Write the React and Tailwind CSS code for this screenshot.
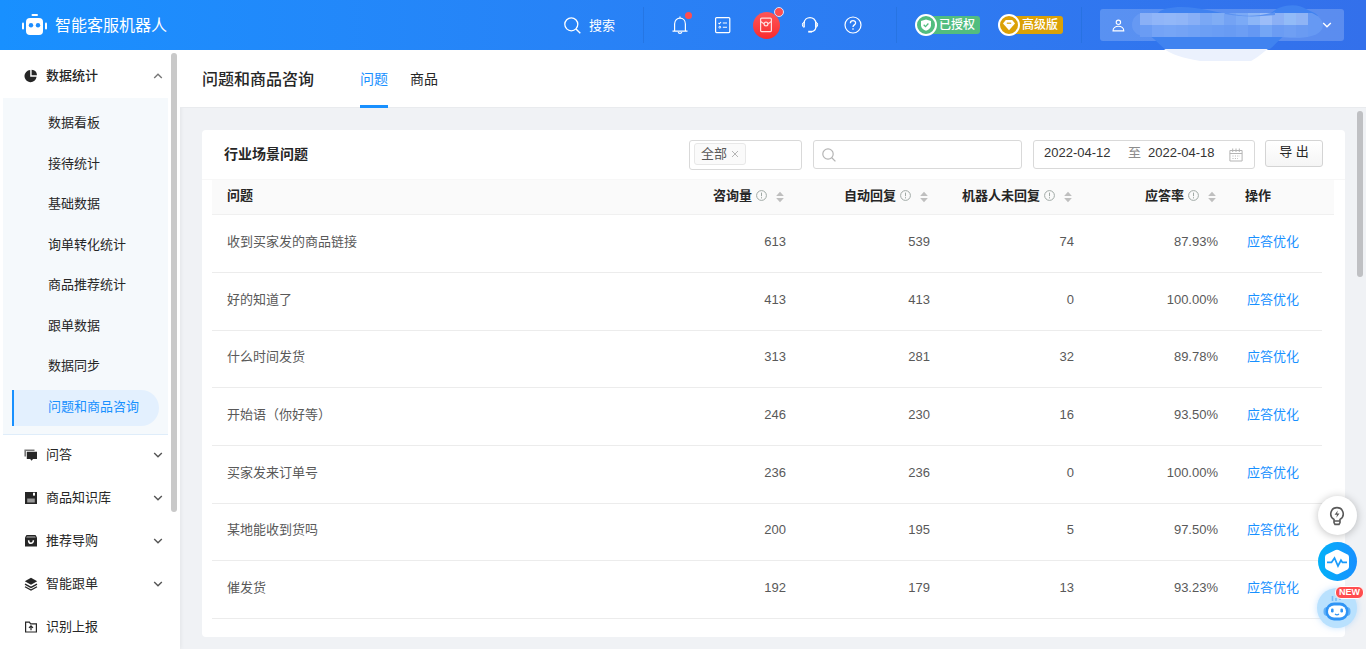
import React from "react";

const subItems = ["数据看板", "接待统计", "基础数据", "询单转化统计", "商品推荐统计", "跟单数据", "数据同步", "问题和商品咨询"];

const rows = [
  ["收到买家发的商品链接", "613", "539", "74", "87.93%"],
  ["好的知道了", "413", "413", "0", "100.00%"],
  ["什么时间发货", "313", "281", "32", "89.78%"],
  ["开始语（你好等）", "246", "230", "16", "93.50%"],
  ["买家发来订单号", "236", "236", "0", "100.00%"],
  ["某地能收到货吗", "200", "195", "5", "97.50%"],
  ["催发货", "192", "179", "13", "93.23%"],
];

const metricHeads = ["咨询量", "自动回复", "机器人未回复", "应答率"];

function Svg({ size = 20, box = 20, className = "", children }) {
  return (
    <svg width={size} height={size} viewBox={`0 0 ${box} ${box}`} fill="none" stroke="currentColor" aria-hidden="true" className={`shrink-0 ${className}`}>
      {children}
    </svg>
  );
}

function Chevron({ up, size = 10, className = "" }) {
  return (
    <Svg size={size} box={10} className={className}>
      <path d={up ? "M1.2 7 5 3.2 8.8 7" : "M1.2 3 5 6.8 8.8 3"} strokeWidth="1.4" />
    </Svg>
  );
}

const menuIcons = {
  pie: (
    <Svg size={14} box={14} className="text-[#262626]">
      <path d="M6.2 1A6.1 6.1 0 1 0 12.6 7.8H6.2z" fill="currentColor" stroke="none" />
      <path d="M7.6 0.8A5.8 5.8 0 0 1 13 6.3H7.6z" fill="currentColor" stroke="none" />
    </Svg>
  ),
  chat: (
    <Svg size={14} box={14} className="text-[#262626]">
      <path d="M1.2 8.6V2.2H10.5" stroke="#777" strokeWidth="1.6" />
      <path d="M2.8 3.8H13V11H9L7.6 12.8 6.2 11H2.8z" fill="currentColor" stroke="none" />
    </Svg>
  ),
  book: (
    <Svg size={14} box={14} className="text-[#262626]">
      <path d="M1 1H13V13H1z" fill="currentColor" stroke="none" />
      <path d="M9 1.8H11V5L10 4.2 9 5z" fill="#fff" stroke="none" />
      <path d="M3.2 7.5H10.8V11.5H3.2z" fill="#999" stroke="none" />
    </Svg>
  ),
  bag: (
    <Svg size={14} box={14} className="text-[#262626]">
      <path d="M2.5 1H11.5L13 3.5V12.5H1V3.5z" fill="currentColor" stroke="none" />
      <path d="M3 2.2H11L11.8 3.8H2.2z" fill="#888" stroke="none" />
      <path d="M4.6 6.2C4.6 10.4 9.4 10.4 9.4 6.2" stroke="#fff" strokeWidth="1.5" />
    </Svg>
  ),
  layers: (
    <Svg size={14} box={14} className="text-[#262626]">
      <path d="M7 .8 13.2 4.3 7 7.8 .8 4.3z" fill="currentColor" stroke="none" />
      <path d="M1 7.1 7 10.4 13 7.1M1 9.7 7 13 13 9.7" strokeWidth="1.3" />
    </Svg>
  ),
  folder: (
    <Svg size={14} box={14} className="text-[#262626]">
      <path d="M1.6 2.2H5.4L6.6 3.8H12.4V12H1.6z" strokeWidth="1.2" />
      <path d="M7 10.3V6M5 7.9 7 5.9 9 7.9" strokeWidth="1.2" />
    </Svg>
  ),
};

const groups = [
  ["chat", "问答", true],
  ["book", "商品知识库", true],
  ["bag", "推荐导购", true],
  ["layers", "智能跟单", true],
  ["folder", "识别上报", false],
];

const mosaicTop = ["#8ab0f6", "#90b5f8", "#92b7f8", "#90b5f7", "#88aff6", "#7aa8f5", "#80adf5", "#74a3f4", "#7baaf6", "#8cb6f7", "#9cbdf8", "#8bb0f5", "#92bbf7", "#8fb4f5"];
const mosaicBottom = ["#6a9cf4", "#74a3f6", "#76a5f6", "#74a3f5", "#70a1f5", "#6c9ff4", "#6a9df4", "#689bf3", "#6c9ef4", "#6598f3", "#74a6f5", "#6b9cf3", "#6f9ff3", "#6a9bf2"];

function RedactedName() {
  return (
    <svg width="200" height="64" viewBox="1130 0 200 64" shapeRendering="geometricPrecision" aria-hidden="true" className="pointer-events-none absolute -top-[9px] left-[30px]">
      <path d="M1150 36C1158 42 1160 45 1166 50H1268C1275 46 1276 42 1284 36z" fill="#4083f0" />
      <path d="M1164 49H1268C1261 54 1257 58 1251 61H1200C1182 58 1171 54 1164 49z" fill="#ebf1fd" />
      <path d="M1157 14C1162 7 1180 6 1195 8 1210 10 1215 12 1228 14zM1270 14C1278 5 1297 2 1306 9 1312 12 1316 13 1318 16z" fill="#3f82f0" />
      <path d="M1142 13H1312C1319 16 1323 20 1323 26 1322 34 1312 37 1300 38H1290L1280 37H1150C1138 37 1132 32 1132 25 1132 19 1136 14 1142 13z" fill="#6699f3" />
      {mosaicTop.map((c, i) => (
        <rect key={i} x={1140 + i * 12} y="13" width="12" height="12" fill={c} />
      ))}
      {mosaicBottom.map((c, i) => (
        <rect key={i} x={1140 + i * 12} y="25" width="12" height="12" fill={c} />
      ))}
      <path d="M1225 12C1240 17 1258 17 1275 12V15C1258 17 1240 17 1225 14z" fill="#5b92f1" />
    </svg>
  );
}

function Divider() {
  return <span className="h-9 w-px bg-[#2370d8]/60" />;
}

function Badge({ label, className, ringClass, children }) {
  return (
    <span className={`relative flex h-[18px] w-[62px] items-center justify-end rounded-[3px] pr-[5px] text-[12px] leading-[18px] font-medium text-white ${className}`}>
      <span className={`absolute -left-[3px] flex size-[22px] items-center justify-center rounded-full border-2 border-white ${ringClass}`}>{children}</span>
      {label}
    </span>
  );
}

function TopBar() {
  return (
    <header className="relative z-10 flex h-[50px] shrink-0 items-center bg-linear-to-r from-[#1890ff] to-[#3370eb] pr-[22px] pl-[22px] text-white">
      <svg width="25" height="22" viewBox="0 0 25 22" fill="#fff" aria-hidden="true">
        <rect x="9.5" y="0" width="6.5" height="2" rx="1" />
        <rect x="4" y="4" width="17" height="17" rx="4" />
        <rect x="0" y="8.5" width="2" height="7" rx="1" />
        <rect x="23" y="8.5" width="2" height="7" rx="1" />
        <circle cx="9" cy="11.3" r="2.2" fill="#1c8dff" />
        <circle cx="16" cy="11.3" r="2.2" fill="#1c8dff" />
      </svg>
      <span className="ml-2 pt-[2px] text-[16px]">智能客服机器人</span>

      <div className="ml-auto flex items-center">
        <button type="button" className="flex items-center gap-2 text-[13px]">
          <Svg size={17} box={17}>
            <circle cx="7.3" cy="7.3" r="6.5" strokeWidth="1.3" />
            <path d="M12 12 16.3 16.3" strokeWidth="1.4" />
          </Svg>
          <span className="pt-[2px]">搜索</span>
        </button>
        <span className="w-7" />
        <Divider />
        <nav className="mr-[22px] ml-[14px] flex items-center">
          <button type="button" aria-label="通知" className="relative flex h-9 w-[43px] items-center justify-center">
            <Svg>
              <path d="M4.6 16V9C4.6 1.2 15.4 1.2 15.4 9V16M2.5 16.1H17.5M10 1.5V3.2" strokeWidth="1.2" />
              <path d="M8.2 17.2C8.5 18.7 11.5 18.7 11.8 17.2" strokeWidth="1.2" />
            </Svg>
            <span className="absolute top-[5px] right-[9px] size-[7px] rounded-full bg-[#ff4d4f]" />
          </button>
          <button type="button" aria-label="任务" className="flex h-9 w-[43px] items-center justify-center">
            <Svg>
              <rect x="2.6" y="2.6" width="14.2" height="15" rx="1" strokeWidth="1.2" />
              <path d="M5.5 8 6.4 8.8 8 7M9.8 8H14M9.8 12.2H14" strokeWidth="1.1" />
              <circle cx="6.8" cy="12.2" r=".9" strokeWidth="1" />
            </Svg>
          </button>
          <button type="button" aria-label="红包" className="relative flex h-9 w-[44px] items-center justify-center">
            <span className="flex size-[27px] items-center justify-center rounded-full bg-linear-to-b from-[#ff5558] to-[#f8282c]">
              <Svg size={16} box={16} className="text-[#ffdede]">
                <rect x="2.6" y="1.2" width="10.8" height="13.4" rx="1" strokeWidth="1.2" />
                <path d="M2.6 4.6 6 6.8M13.4 4.6 10 6.8" strokeWidth="1.2" />
                <circle cx="8" cy="7" r="1.9" strokeWidth="1.2" />
              </Svg>
            </span>
            <span className="absolute top-0 right-[4px] size-[10px] rounded-full border border-[#d5e5ff] bg-[#ff4d4f]" />
          </button>
          <button type="button" aria-label="客服" className="flex h-9 w-[43px] items-center justify-center">
            <Svg>
              <path d="M4.2 8.2C4.2 .7 15.8 .7 15.8 8.2V12C15.8 14.6 13.6 16.2 11.8 16.6" strokeWidth="1.2" />
              <path d="M4.3 7.3H3.8C1.9 7.3 1.9 12.2 3.8 12.2H4.3zM15.7 7.3H16.2C18.1 7.3 18.1 12.2 16.2 12.2H15.7z" fill="#fff" fillOpacity=".5" strokeWidth="1" />
              <path d="M8.2 16.7H12" strokeWidth="1.8" />
            </Svg>
          </button>
          <button type="button" aria-label="帮助" className="flex h-9 w-[43px] items-center justify-center">
            <Svg>
              <circle cx="10" cy="10" r="8" strokeWidth="1.2" />
              <path d="M7.4 8.2C7.4 4.6 12.7 4.8 12.6 8 12.5 9.9 10 9.9 10 12M10 13.2V14.8" strokeWidth="1.3" />
            </Svg>
          </button>
        </nav>
        <Divider />
        <span className="w-[21px]" />
        <Badge label="已授权" className="bg-[#52bd7f]" ringClass="bg-[#52bd7f]">
          <Svg size={12} box={12}>
            <path d="M6 0.4 11 2V6.4C11 9 8.4 10.9 6 11.8 3.6 10.9 1 9 1 6.4V2z" fill="#fff" stroke="none" />
            <path d="M3.7 5.8 5.5 7.6 8.4 4.5" stroke="#52bd7f" strokeWidth="1.3" />
          </Svg>
        </Badge>
        <span className="w-[21px]" />
        <Badge label="高级版" className="bg-[#dba106]" ringClass="bg-[#dba106]">
          <Svg size={12} box={12}>
            <path d="M2.8 1H9.2L12 4.6 6 11.2 0 4.6z" fill="#fff" stroke="none" />
            <path d="M3.8 4.2H8.2" stroke="#dba106" strokeWidth="1.2" />
          </Svg>
        </Badge>
        <span className="w-[18px]" />
        <Divider />
        <button type="button" aria-label="账户" className="relative ml-[18px] flex h-8 w-[244px] items-center justify-between rounded-[3px] bg-white/20 pr-3 pl-3">
          <Svg size={13} box={13}>
            <circle cx="6.4" cy="3.3" r="2.2" strokeWidth="1.1" />
            <path d="M1 11.9C.8 5.6 12 5.6 11.8 11.9z" strokeWidth="1.1" />
          </Svg>
          <RedactedName />
          <Chevron className="relative" />
        </button>
      </div>
    </header>
  );
}

function Sidebar() {
  return (
    <aside className="relative w-[180px] shrink-0 overflow-hidden bg-white pt-[3px] pr-3 pl-[3px] text-[13px] text-[#262626] shadow-[1px_0_4px_rgba(0,0,0,0.06)]">
      <button type="button" aria-expanded="true" className="flex h-[45px] w-full items-center gap-2 pr-[5px] pl-[21px] font-medium">
        {menuIcons.pie}
        <span>数据统计</span>
        <Chevron up className="ml-auto text-[#777]" />
      </button>
      <ul className="flex h-[337px] flex-col justify-between border-b border-[#dfedfa] bg-[#f5f9fc] py-2 pr-[9px] pl-[9px]">
        {subItems.map((t, i) => {
          const active = i === subItems.length - 1;
          return (
            <li key={t}>
              <a
                href="#"
                aria-current={active ? "page" : undefined}
                className={`flex h-9 items-center border-l-2 pb-[2px] pl-[34px] ${active ? "rounded-r-full border-[#1890ff] bg-[#e3f0fe] text-[#1890ff]" : "border-transparent"}`}
              >
                {t}
              </a>
            </li>
          );
        })}
      </ul>
      {groups.map(([icon, label, more]) => (
        <button key={label} type="button" className="flex h-[43px] w-full items-center gap-2 pr-[5px] pb-[4px] pl-[21px]">
          {menuIcons[icon]}
          <span>{label}</span>
          {more && <Chevron className="ml-auto text-[#555]" />}
        </button>
      ))}
      <span className="absolute top-[3px] left-[171px] h-[459px] w-[6px] rounded-full bg-[#c9c9c9]" />
    </aside>
  );
}

function Filters() {
  const box = "flex items-center rounded-[3px] border border-[#d9d9d9] bg-white";
  return (
    <div className="flex h-[50px] items-start border-b border-[#f7f7f7] pt-[10px] pr-[22px] pl-[22px]">
      <h2 className="mr-auto text-[14px] leading-[29px] font-bold text-[#262626]">行业场景问题</h2>
      <div className={`${box} mr-[11px] h-[30px] w-[113px] px-1`}>
        <span className="mb-[2px] flex h-[22px] items-center gap-1 rounded-[3px] border border-[#e8e8e8] bg-[#fafafa] px-[6px] text-[13px] text-[#595959]">
          全部
          <button type="button" aria-label="移除" className="text-[#b5b5b5]">
            <Svg size={8} box={8}>
              <path d="M1 1 7 7M7 1 1 7" />
            </Svg>
          </button>
        </span>
      </div>
      <label className={`${box} mr-[11px] h-[29px] w-[209px] gap-2 px-2`}>
        <Svg size={14} box={14} className="text-[#b5b5b5]">
          <circle cx="6" cy="6" r="5.2" strokeWidth="1.2" />
          <path d="M9.8 9.8 13.4 13.4" strokeWidth="1.3" />
        </Svg>
        <input type="text" aria-label="搜索问题" className="min-w-0 flex-1 text-[13px] outline-none" />
      </label>
      <div className={`${box} mr-[10px] h-[29px] w-[222px] pr-[11px] pb-1 pl-[10px] text-[13px] text-[#333]`}>
        <input type="text" aria-label="开始日期" defaultValue="2022-04-12" className="w-[84px] outline-none" />
        <span className="w-5 text-[#8c8c8c]">至</span>
        <input type="text" aria-label="结束日期" defaultValue="2022-04-18" className="w-[76px] outline-none" />
        <Svg size={14} box={14} className="mt-1 ml-auto text-[#b5b5b5]">
          <path d="M.9 2.5H13.1V13H.9zM.9 5.5H13.1" />
          <path d="M3.7.5V4M7 .5V4M10.3.5V4" />
          <path d="M3.5 8H11M3.5 10.5H9" strokeDasharray="1 1.4" />
        </Svg>
      </div>
      <button type="button" className="h-[27px] w-[58px] rounded-[3px] border border-[#d4d4d4] bg-linear-to-b from-white to-[#f5f5f5] pb-[3px] text-[13px] text-[#262626]">
        导 出
      </button>
    </div>
  );
}

function SortHead({ label }) {
  return (
    <button type="button" className="inline-flex items-center font-bold">
      {label}
      <Svg size={11} box={11} className="ml-1 text-[#a0a9a5]">
        <circle cx="5.5" cy="5.5" r="4.9" />
        <path d="M5.5 2.6V6.2M5.5 7.2V8.4" />
      </Svg>
      <Svg size={8} box={12} className="mt-[3px] ml-[9px] h-3 text-[#bfbfbf]">
        <path d="M6 -1.8 11.8 4.5H.2zM6 13.8 .2 7.5H11.8z" fill="currentColor" stroke="none" />
      </Svg>
    </button>
  );
}

function DataTable() {
  return (
    <table className="ml-[10px] w-[calc(100%-21px)] table-fixed border-collapse text-[13px] text-[#595959]">
      <colgroup>
        <col />
        <col className="w-36" />
        <col className="w-36" />
        <col className="w-36" />
        <col className="w-36" />
        <col className="w-[89px]" />
        <col className="w-3" />
      </colgroup>
      <thead>
        <tr className="h-[34px] border-b border-[#f0f0f0] bg-[#fafafa] text-[#262626]">
          <th scope="col" className="pb-[2px] pl-[15px] text-left font-bold">问题</th>
          {metricHeads.map((h) => (
            <th key={h} scope="col" className="pr-[17px] pb-[2px] text-right whitespace-nowrap">
              <SortHead label={h} />
            </th>
          ))}
          <th scope="col" className="pb-[2px] pl-3 text-left font-bold">操作</th>
          <td />
        </tr>
      </thead>
      <tbody>
        {rows.map(([name, ...nums]) => (
          <tr key={name} className="h-[58px] nth-[3n]:h-[57px]">
            <td className="border-b border-[#ececec] pb-[3px] pl-[15px]">{name}</td>
            {nums.map((n, i) => (
              <td key={i} className="border-b border-[#ececec] pr-[15px] pb-[3px] text-right">{n}</td>
            ))}
            <td className="border-b border-[#ececec] pb-[3px] pl-[14px]">
              <a href="#" className="text-[#1890ff]">应答优化</a>
            </td>
            <td />
          </tr>
        ))}
      </tbody>
    </table>
  );
}

function FloatingTools() {
  return (
    <div className="absolute right-[9px] bottom-[21px] flex flex-col items-center gap-[7px]">
      <button type="button" aria-label="提示" className="flex size-[39px] items-center justify-center rounded-full bg-white text-[#595959] shadow-[0_1px_8px_rgba(0,0,0,0.25)]">
        <Svg>
          <path d="M7 13.4C1.4 10 3.6 1.6 10 1.6S18.6 10 13 13.4V15H7zM7 15V16.6L8 18.4H12L13 16.6V15" strokeWidth="1.6" />
          <path d="M10.8 4.6 7.6 8.7H10L9.3 11.8 12.5 7.6H10.1z" fill="currentColor" stroke="none" />
        </Svg>
      </button>
      <button type="button" aria-label="诊断" className="flex size-[39px] items-center justify-center rounded-full bg-linear-to-r from-[#03b1f8] to-[#1890ff]">
        <svg width="26" height="26" viewBox="0 0 26 26" fill="none" aria-hidden="true">
          <path d="M11.5 1Q13 .3 14.5 1L23.5 5.6Q25 6.5 25 8V18Q25 19.5 23.5 20.4L14.5 25Q13 25.7 11.5 25L2.5 20.4Q1 19.5 1 18V8Q1 6.5 2.5 5.6z" fill="#fff" />
          <path d="M3 13.4H7.5L10.5 9 14 17 17 11.2 18.5 13.4H23" stroke="#1a9bfb" strokeWidth="1.8" />
        </svg>
      </button>
      <button type="button" aria-label="智能助手" className="relative flex size-10 items-center justify-center rounded-full bg-[#b9e1fe] shadow-[0_0_6px_rgba(140,200,255,0.5)]">
        <svg width="30" height="30" viewBox="0 0 30 30" fill="none" aria-hidden="true">
          <path d="M10.5 3V8M14 5V8M18 2V7" stroke="#79bdf8" strokeWidth="1.6" />
          <rect x="1.5" y="14" width="27" height="9" rx="4" fill="#61b1f8" />
          <rect x="3.6" y="9.6" width="22.8" height="18" rx="8.5" fill="#2f94f5" />
          <rect x="6" y="12.6" width="18" height="12" rx="6" fill="#fff" />
          <rect x="9" y="15.5" width="2.6" height="4" rx="1.2" fill="#2f94f5" />
          <rect x="18.4" y="15.5" width="2.6" height="4" rx="1.2" fill="#2f94f5" />
          <path d="M13 21Q15 22.8 17 21" stroke="#2f94f5" strokeWidth="1.2" />
        </svg>
        <span className="absolute -top-[2px] -right-[7px] rounded-[6px] border border-white bg-[#ff4d4f] px-[3px] text-[9px] leading-[11px] font-bold text-white">NEW</span>
      </button>
    </div>
  );
}

export default function App() {
  return (
    <div className="relative flex h-screen flex-col overflow-hidden bg-[#f0f2f5] font-['Liberation_Sans','Noto_Sans_CJK_SC',sans-serif] leading-5">
      <TopBar />
      <div className="flex min-h-0 flex-1">
        <Sidebar />
        <main className="relative flex min-w-0 flex-1 flex-col">
          <div className="flex h-[58px] shrink-0 items-center border-b border-[#e9ebee] bg-white pl-[22px]">
            <h1 className="pt-[3px] text-[16px] font-medium text-[#262626]">问题和商品咨询</h1>
            <nav className="ml-[46px] flex gap-[22px] self-stretch text-[14px] text-[#262626]">
              <a href="#" aria-current="page" className="-mb-px border-b-3 border-[#1890ff] leading-[58px] text-[#1890ff]">问题</a>
              <a href="#" className="leading-[58px]">商品</a>
            </nav>
          </div>
          <section className="mt-[22px] mr-[21px] ml-[22px] rounded-[4px] bg-white pb-[18px]">
            <Filters />
            <DataTable />
          </section>
          <span className="absolute top-[61px] right-[3px] h-[166px] w-[6px] rounded-full bg-[#bfc0c3]" />
        </main>
      </div>
      <FloatingTools />
    </div>
  );
}
